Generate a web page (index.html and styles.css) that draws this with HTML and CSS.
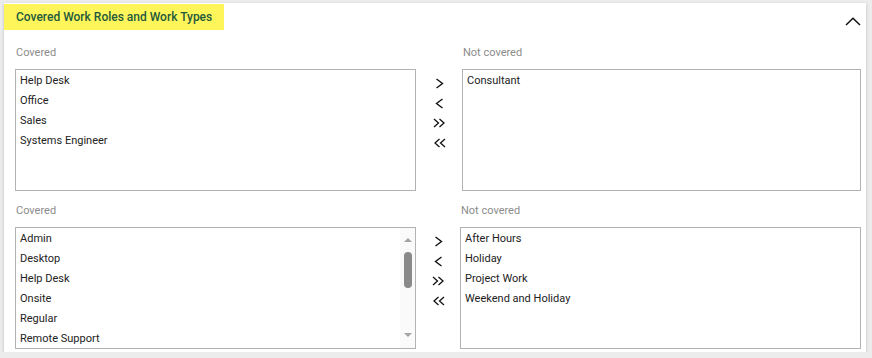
FILE: index.html
```html
<!DOCTYPE html>
<html lang="en">
<head>
    <meta charset="UTF-8">
    <meta name="viewport" content="width=device-width, initial-scale=1.0">
    <title>Covered Work Roles and Work Types</title>
    <link rel="stylesheet" href="styles.css">
</head>
<body>
    <div class="card">
        <div class="card-head">
            <div class="card-title">Covered Work Roles and Work Types</div>
            <svg class="collapse" width="16" height="9" viewBox="0 0 16 9"><path d="M1 8 L8 1.2 L15 8" fill="none" stroke="#111" stroke-width="1.5"/></svg>
        </div>

        <div class="card-body">
            <div class="pair">
                <div class="pair-label">Covered</div>
                <div></div>
                <div class="pair-label">Not covered</div>

                <ul class="listbox">
                    <li>Help Desk</li>
                    <li>Office</li>
                    <li>Sales</li>
                    <li>Systems Engineer</li>
                </ul>
                <div class="movers">
                    <button title="Move right"><svg width="9" height="11" viewBox="0 0 9 11"><path d="M1.5 1 L7.5 5.5 L1.5 10" fill="none" stroke="#111" stroke-width="1.4"/></svg></button>
                    <button title="Move left"><svg width="9" height="11" viewBox="0 0 9 11"><path d="M7.5 1 L1.5 5.5 L7.5 10" fill="none" stroke="#111" stroke-width="1.4"/></svg></button>
                    <button title="Move all right"><svg width="13" height="10" viewBox="0 0 13 10"><path d="M1 1 L5.5 5 L1 9 M6.5 1 L11 5 L6.5 9" fill="none" stroke="#111" stroke-width="1.3"/></svg></button>
                    <button title="Move all left"><svg width="13" height="10" viewBox="0 0 13 10"><path d="M12 1 L7.5 5 L12 9 M6.5 1 L2 5 L6.5 9" fill="none" stroke="#111" stroke-width="1.3"/></svg></button>
                </div>
                <ul class="listbox">
                    <li>Consultant</li>
                </ul>
            </div>

            <div class="pair pair-wide">
                <div class="pair-label">Covered</div>
                <div></div>
                <div class="pair-label">Not covered</div>

                <div class="listbox listbox-scroll">
                    <ul class="items">
                        <li>Admin</li>
                        <li>Desktop</li>
                        <li>Help Desk</li>
                        <li>Onsite</li>
                        <li>Regular</li>
                        <li>Remote Support</li>
                    </ul>
                    <div class="scrollbar">
                        <span class="tri tri-up"></span>
                        <span class="thumb"></span>
                        <span class="tri tri-down"></span>
                    </div>
                </div>
                <div class="movers">
                    <button title="Move right"><svg width="9" height="11" viewBox="0 0 9 11"><path d="M1.5 1 L7.5 5.5 L1.5 10" fill="none" stroke="#111" stroke-width="1.4"/></svg></button>
                    <button title="Move left"><svg width="9" height="11" viewBox="0 0 9 11"><path d="M7.5 1 L1.5 5.5 L7.5 10" fill="none" stroke="#111" stroke-width="1.4"/></svg></button>
                    <button title="Move all right"><svg width="13" height="10" viewBox="0 0 13 10"><path d="M1 1 L5.5 5 L1 9 M6.5 1 L11 5 L6.5 9" fill="none" stroke="#111" stroke-width="1.3"/></svg></button>
                    <button title="Move all left"><svg width="13" height="10" viewBox="0 0 13 10"><path d="M12 1 L7.5 5 L12 9 M6.5 1 L2 5 L6.5 9" fill="none" stroke="#111" stroke-width="1.3"/></svg></button>
                </div>
                <ul class="listbox">
                    <li>After Hours</li>
                    <li>Holiday</li>
                    <li>Project Work</li>
                    <li>Weekend and Holiday</li>
                </ul>
            </div>
        </div>
    </div>
</body>
</html>
```

FILE: styles.css
```css
body { margin: 0; background: #ececec; font-family: Roboto, "Liberation Sans", Arial, sans-serif; }
.card { margin: 3px 6px 0 4px; height: 349px; background: #fff; box-shadow: 0 1px 3px rgba(0,0,0,0.2); }
.card-head { display: flex; justify-content: space-between; align-items: flex-start; height: 27px; padding-right: 5px; }
.card-title { background: #fdf55a; margin-top: 1px; height: 26px; line-height: 26px; padding: 0 12px; font-size: 12px; font-weight: 500; color: #1f5a3c; }
.collapse { margin-top: 14px; }
.card-body { padding: 0 5px 0 11px; }
.pair { display: grid; grid-template-columns: 401px 1fr 399px; row-gap: 9px; margin-top: 15px; }
.pair-wide { grid-template-columns: 401px 1fr 401px; margin-top: 12px; }
.pair-label { height: 14px; line-height: 14px; padding: 1px 0 0 1px; font-size: 11px; color: #8c8c8c; }
.listbox { list-style: none; margin: 0; padding: 1px 4px 0; height: 122px; box-sizing: border-box; border: 1px solid #b3b3b3; overflow: hidden; }
.listbox li, .items li { height: 20px; line-height: 20px; font-size: 11px; color: #222; white-space: nowrap; }
.listbox-scroll { display: flex; padding: 0 0 0 4px; }
.items { list-style: none; margin: 0; padding: 1px 0 0; flex: 1; }
.scrollbar { width: 15px; background: #fafafa; display: flex; flex-direction: column; align-items: center; padding: 10px 0 11px; }
.tri { width: 0; height: 0; border-left: 4px solid transparent; border-right: 4px solid transparent; }
.tri-up { border-bottom: 4px solid #a3a3a3; }
.tri-down { border-top: 4px solid #a3a3a3; margin-top: auto; }
.thumb { width: 8px; height: 36px; margin-top: 10px; border-radius: 4px; background: #8a8a8a; }
.movers { display: flex; flex-direction: column; align-items: center; padding-top: 4px; }
.movers button { width: 20px; height: 20px; padding: 0; border: 0; background: none; display: flex; align-items: center; justify-content: center; cursor: pointer; }
```
